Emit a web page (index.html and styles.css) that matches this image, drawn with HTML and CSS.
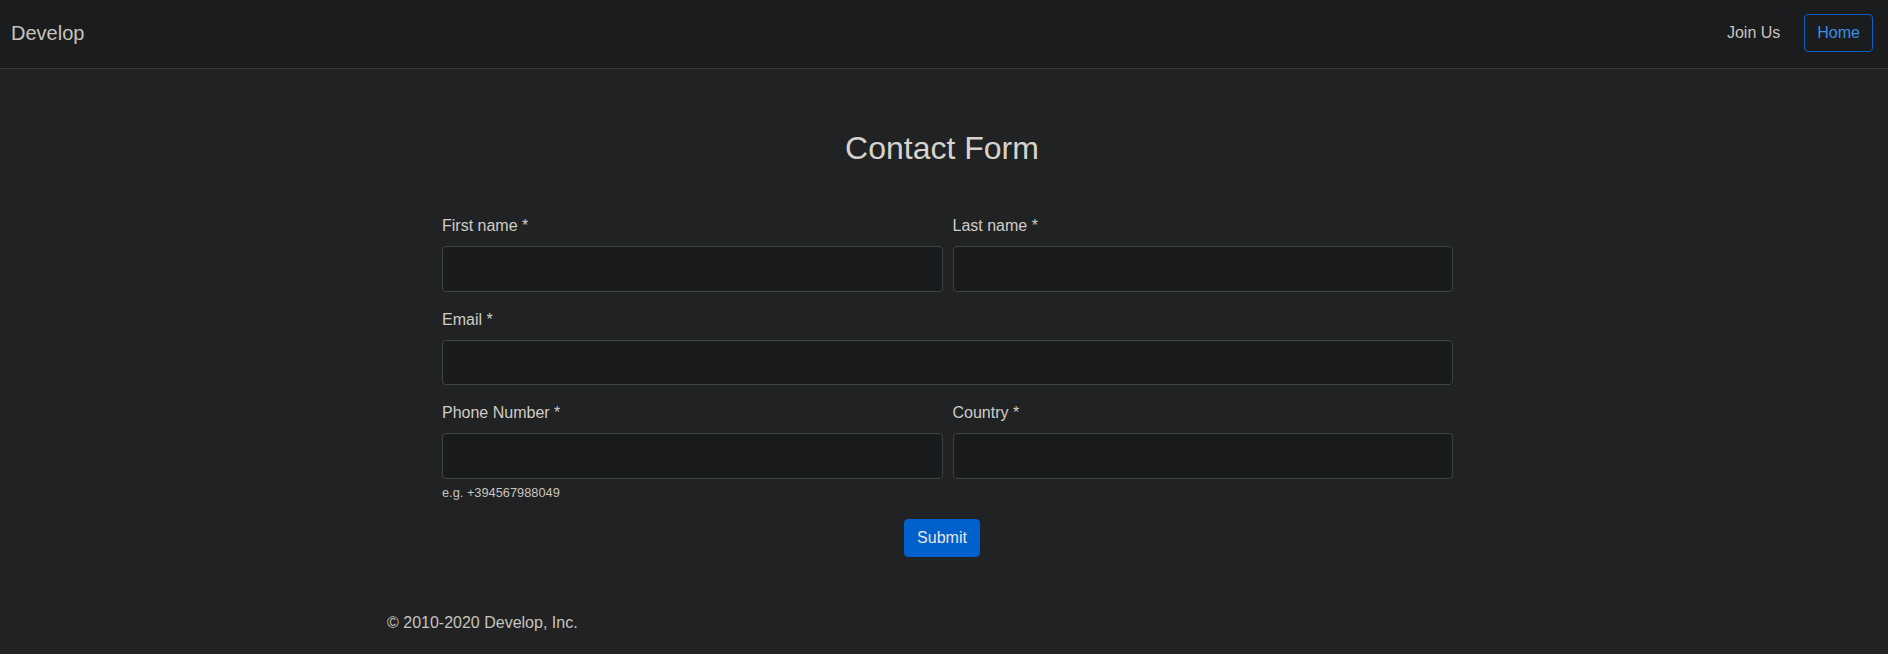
FILE: index.html
```html
<!DOCTYPE html>
<html lang="en">
<head>
<meta charset="utf-8">
<title>Contact Form</title>
<link rel="stylesheet" href="styles.css">
</head>
<body>
<nav class="navbar">
  <a class="brand" href="#">Develop</a>
  <div class="nav-right">
    <a class="nav-link" href="#">Join Us</a>
    <a class="btn-outline" href="#">Home</a>
  </div>
</nav>
<main class="main">
  <h1 class="title">Contact Form</h1>
  <form class="form">
    <div class="fields">
      <div class="row">
        <div class="group">
          <label class="label" for="fn">First name *</label>
          <input class="input" id="fn" type="text">
        </div>
        <div class="group">
          <label class="label" for="ln">Last name *</label>
          <input class="input" id="ln" type="text">
        </div>
      </div>
      <div class="group">
        <label class="label" for="em">Email *</label>
        <input class="input" id="em" type="email">
      </div>
      <div class="row">
        <div class="group">
          <label class="label" for="ph">Phone Number *</label>
          <input class="input" id="ph" type="tel">
          <small class="hint">e.g. +394567988049</small>
        </div>
        <div class="group">
          <label class="label" for="co">Country *</label>
          <input class="input" id="co" type="text">
        </div>
      </div>
    </div>
    <div class="actions">
      <button class="btn-primary" type="submit">Submit</button>
    </div>
  </form>
</main>
<footer class="footer">
  <p class="copy">© 2010-2020 Develop, Inc.</p>
</footer>
</body>
</html>
```

FILE: styles.css
```css
html, body {
  margin: 0;
  padding: 0;
}
body {
  background: #202224;
  color: #d3cfc9;
  font-family: "Liberation Sans", Arial, sans-serif;
  font-size: 16px;
  line-height: 24px;
  min-height: 654px;
}
a {
  text-decoration: none;
}
.navbar {
  height: 66px;
  padding: 0 15px 2px 11px;
  display: flex;
  align-items: center;
  justify-content: space-between;
  background: #1b1c1e;
  border-bottom: 1px solid #383c3f;
}
.brand {
  font-size: 20px;
  line-height: 30px;
  color: #c8c3bc;
}
.nav-right {
  display: flex;
  align-items: center;
}
.nav-link {
  color: #c8c3bc;
  padding: 7px 8px;
  margin-right: 16px;
}
.btn-outline {
  display: inline-block;
  color: #3a8fe8;
  border: 1px solid #0b5ec4;
  border-radius: 4px;
  padding: 6px 12px;
  line-height: 24px;
}
.main {
  padding: 60px 4px 0 0;
}
.title {
  margin: 0 0 47px;
  text-align: center;
  font-size: 32px;
  line-height: 38.4px;
  font-weight: 400;
  color: #d6d2cc;
}
.form {
  margin: 0;
}
.fields {
  width: 1011px;
  margin-left: calc(50% - 500px);
}
.row {
  display: grid;
  grid-template-columns: 1fr 1fr;
  column-gap: 10px;
}
.group {
  display: flex;
  flex-direction: column;
  margin-bottom: 16px;
}
.label {
  margin-bottom: 8px;
  line-height: 24px;
  color: #d0ccc6;
}
.input {
  box-sizing: border-box;
  height: 45.5px;
  width: 100%;
  margin: 0;
  background: #1a1b1d;
  border: 1px solid #3e4346;
  border-radius: 4px;
  color: #d0ccc6;
  font: inherit;
  padding: 6px 12px;
}
.hint {
  margin-top: 4px;
  font-size: 12.8px;
  line-height: 19.2px;
  color: #c8c3bc;
}
.actions {
  padding-top: 1px;
  text-align: center;
}
.btn-primary {
  font: inherit;
  line-height: 24px;
  padding: 6px 12px;
  border: 1px solid #0060cc;
  border-radius: 4px;
  background: #0060cc;
  color: #e8e6e3;
  cursor: pointer;
}
.footer {
  width: 1140px;
  margin: 0 auto;
  box-sizing: border-box;
  padding: 54px 15px 0 13px;
}
.copy {
  margin: 0;
  color: #c8c3bc;
}
```
